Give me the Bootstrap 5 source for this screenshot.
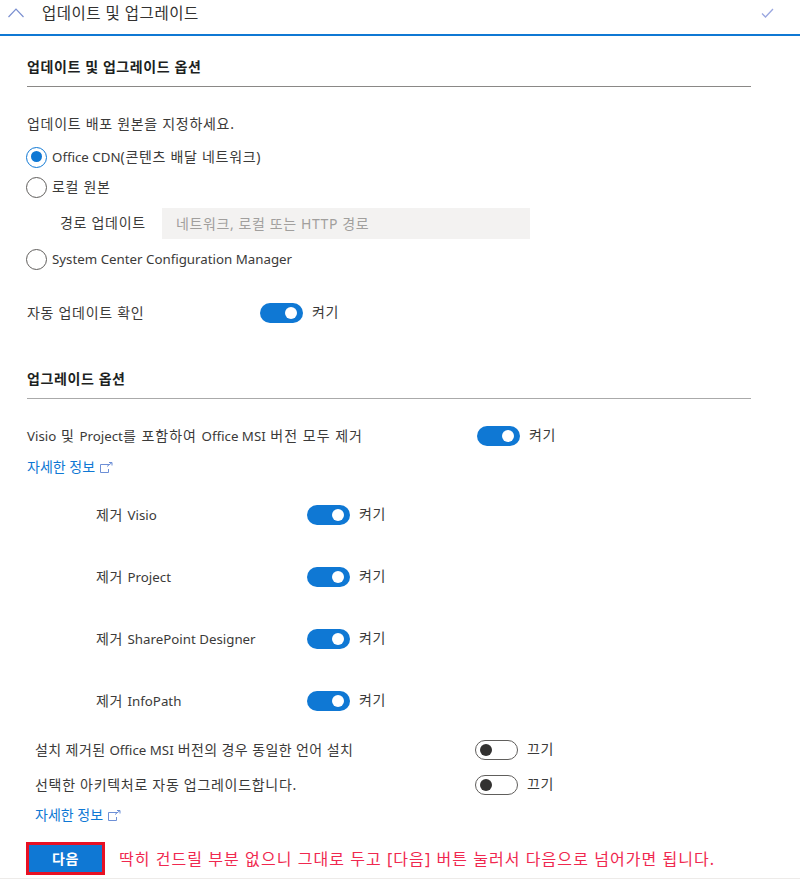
<!doctype html>
<html lang="ko">
<head>
<meta charset="utf-8">
<title>업데이트 및 업그레이드</title>
<link href="https://cdn.jsdelivr.net/npm/bootstrap@5.3.0/dist/css/bootstrap.min.css" rel="stylesheet">
<style>
html,body{background:#fff}
body{width:800px;height:880px;overflow:hidden;font-family:"Noto Sans","Noto Sans CJK KR",sans-serif;font-size:14px;letter-spacing:.7px;color:#3b3a39;line-height:20px}
.lat{font-size:13.3px;letter-spacing:0}
.pane-head{height:37px;border-bottom:2px solid #0f78d4;padding:0 26px 7px 8px;margin-top:-1px}
.pane-title{font-size:15.5px;letter-spacing:.5px;margin-left:18px;color:#323130}
.pane-body{padding:0 49px 0 27px}
.sec-head{font-weight:700;font-size:14px;letter-spacing:.6px;color:#201f1e;border-bottom:1px solid #8a8886;height:43px;padding-top:13px;margin-top:8px}
.sec-two{margin-top:37px;border-color:#aaa;height:39px;padding-top:9px}
.lead-line{margin-top:27px;height:20px}
.radio-list{margin-top:8px}
.radio-row{height:30px;gap:5px;margin-left:-1px}
.radio-dot{width:21px;height:21px;border:1.5px solid #605e5c;border-radius:50%;flex:none;background:#fff}
.radio-on{border-color:#0f78d4;position:relative}
.radio-on::after{content:"";position:absolute;left:3.5px;top:3.5px;width:11px;height:11px;border-radius:50%;background:#0f78d4}
.radio-last{margin-top:3px}
.path-row{height:36px;margin-left:33px;margin-top:3px}
.path-label{width:102px}
.path-input{width:368px;height:31px;border:0;border-radius:0;background:#f3f2f1;padding:0 14px;font-size:14px;letter-spacing:.6px;font-family:inherit;color:#a19f9d}
.path-input::placeholder{color:#a19f9d;opacity:1}
.opt-row{height:20px}
.gap-auto{margin-top:29px}
.gap-visio{margin-top:27px}
.gap-link{margin-top:11px}
.gap-off{margin-top:29px}
.gap-off2{margin-top:15px}
.gap-link2{margin-top:10px}
.tog{width:43px;height:20px;border-radius:10px;flex:none;position:relative;background:#0f78d4}
.tog::after{content:"";position:absolute;right:6px;top:4px;width:12px;height:12px;border-radius:50%;background:#fff}
.tog-off{background:#fff;border:1px solid #605e5c}
.tog-off::after{left:4px;right:auto;top:3px;background:#323130}
.tog-cap{margin-left:9px;margin-top:-3px}
.lab-a{width:233px}
.lab-b{width:450px;letter-spacing:1px}
.lab-c{width:211px}
.lab-d{width:440px}
.lab-tight{letter-spacing:.4px}
.sub-list{margin-left:69px;margin-top:28px;gap:42px}
.info-link{color:#0f78d4;text-decoration:none;height:20px;gap:5px;letter-spacing:0}
.ind{margin-left:8px}
.next-btn{width:79px;height:33px;background:#0f78d4;border:3px solid #e81123;border-radius:0;color:#fff;font-weight:700;font-size:14px;letter-spacing:.6px;padding:0;line-height:1}
.next-btn:hover{background:#0f78d4;border-color:#e81123;color:#fff}
.note{color:#f0284f;font-size:16px;letter-spacing:1.06px;margin-left:14px}
.foot-row{margin-left:-1px;margin-top:17px}
.base-line{position:absolute;left:0;right:0;top:878px;height:1px;background:#edebe9}
</style>
</head>
<body class="position-relative">
<div class="pane-head d-flex align-items-center justify-content-between">
  <div class="d-flex align-items-center">
    <svg width="16" height="10" viewBox="0 0 16 10" fill="none" stroke="#7a8fd0" stroke-width="1.2"><path d="M.5 9 8 1.2 15.5 9"/></svg>
    <span class="pane-title">업데이트 및 업그레이드</span>
  </div>
  <svg width="13" height="10" viewBox="0 0 13 10" fill="none" stroke="#9aa7e0" stroke-width="1.3"><path d="M1 5.5 4.5 9 12 1"/></svg>
</div>
<div class="pane-body">
  <div class="sec-head">업데이트 및 업그레이드 옵션</div>
  <div class="lead-line">업데이트 배포 원본을 지정하세요.</div>
  <div class="radio-list">
    <div class="radio-row d-flex align-items-center"><span class="radio-dot radio-on"></span><span><span class="lat">Office CDN</span>(콘텐츠 배달 네트워크)</span></div>
    <div class="radio-row d-flex align-items-center"><span class="radio-dot"></span><span>로컬 원본</span></div>
    <div class="path-row d-flex align-items-center"><span class="path-label">경로 업데이트</span><input class="path-input" placeholder="네트워크, 로컬 또는 HTTP 경로"></div>
    <div class="radio-row radio-last d-flex align-items-center"><span class="radio-dot"></span><span class="lat">System Center Configuration Manager</span></div>
  </div>
  <div class="opt-row gap-auto d-flex align-items-center">
    <span class="lab-a">자동 업데이트 확인</span><span class="tog"></span><span class="tog-cap">켜기</span>
  </div>
  <div class="sec-head sec-two">업그레이드 옵션</div>
  <div class="opt-row gap-visio d-flex align-items-center">
    <span class="lab-b"><span class="lat">Visio</span> 및 <span class="lat">Project</span>를 포함하여 <span class="lat">Office MSI</span> 버전 모두 제거</span><span class="tog"></span><span class="tog-cap">켜기</span>
  </div>
  <a href="#" class="info-link gap-link d-flex align-items-center">자세한 정보
    <svg width="13" height="11" viewBox="0 0 13 11" fill="none" stroke="#6d8fd6"><path d="M9 2.5H.5v8h8V7M7 4.5 12 .5M9 .5h3v3"/></svg></a>
  <div class="sub-list d-flex flex-column">
    <div class="opt-row d-flex align-items-center"><span class="lab-c">제거 <span class="lat">Visio</span></span><span class="tog"></span><span class="tog-cap">켜기</span></div>
    <div class="opt-row d-flex align-items-center"><span class="lab-c">제거 <span class="lat">Project</span></span><span class="tog"></span><span class="tog-cap">켜기</span></div>
    <div class="opt-row d-flex align-items-center"><span class="lab-c">제거 <span class="lat">SharePoint Designer</span></span><span class="tog"></span><span class="tog-cap">켜기</span></div>
    <div class="opt-row d-flex align-items-center"><span class="lab-c">제거 <span class="lat">InfoPath</span></span><span class="tog"></span><span class="tog-cap">켜기</span></div>
  </div>
  <div class="ind d-flex flex-column">
    <div class="opt-row gap-off d-flex align-items-center"><span class="lab-d lab-tight">설치 제거된 <span class="lat">Office MSI</span> 버전의 경우 동일한 언어 설치</span><span class="tog tog-off"></span><span class="tog-cap">끄기</span></div>
    <div class="opt-row gap-off2 d-flex align-items-center"><span class="lab-d">선택한 아키텍처로 자동 업그레이드합니다.</span><span class="tog tog-off"></span><span class="tog-cap">끄기</span></div>
    <a href="#" class="info-link gap-link2 d-flex align-items-center">자세한 정보
      <svg width="13" height="11" viewBox="0 0 13 11" fill="none" stroke="#6d8fd6"><path d="M9 2.5H.5v8h8V7M7 4.5 12 .5M9 .5h3v3"/></svg></a>
  </div>
  <div class="foot-row d-flex align-items-center">
    <button type="button" class="btn next-btn">다음</button>
    <span class="note text-nowrap">딱히 건드릴 부분 없으니 그대로 두고 [다음] 버튼 눌러서 다음으로 넘어가면 됩니다.</span>
  </div>
</div>
<div class="base-line"></div>
<script src="https://cdn.jsdelivr.net/npm/bootstrap@5.3.0/dist/js/bootstrap.bundle.min.js"></script>
</body>
</html>
